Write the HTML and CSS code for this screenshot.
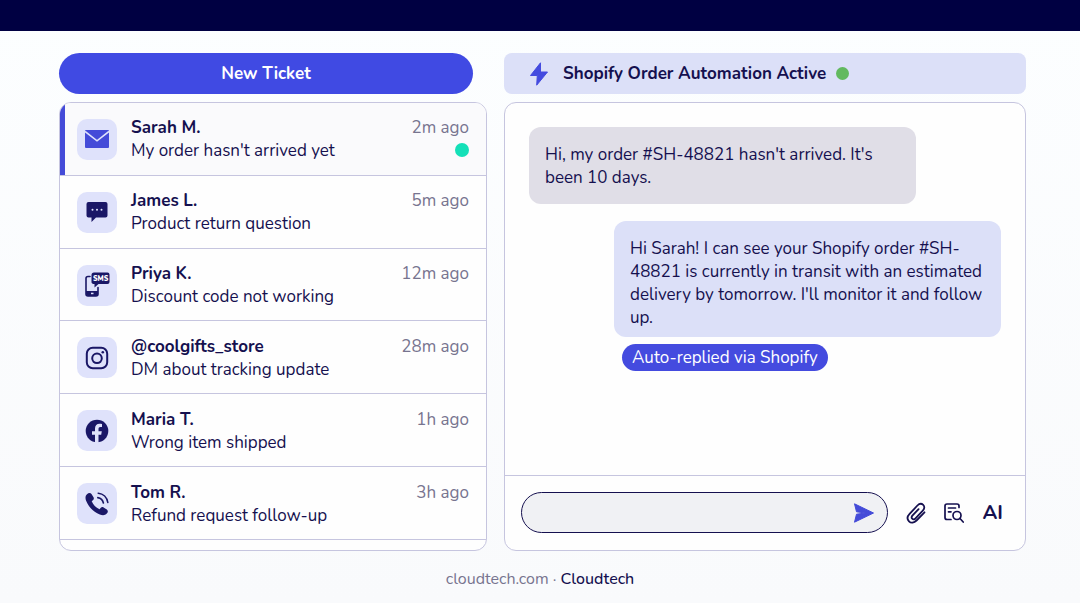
FILE: index.html
```
<!DOCTYPE html>
<html lang="en">
<head>
    <meta charset="UTF-8">
    <meta name="viewport" content="width=device-width, initial-scale=1.0">
    <title>Cloudtech Inbox</title>
    <link rel="stylesheet" href="styles.css">
</head>
<body>
    <header class="topbar"></header>

    <main class="inbox">
        <section class="tickets">
            <button class="new-ticket" type="button">New Ticket</button>
            <ul class="panel ticket-list">
                <li class="ticket active">
                    <span class="channel">
                        <svg width="24" height="18" viewBox="0 0 24 18">
                            <path fill="#444bd8" d="M1 0h22q1 0 1 1v16q0 1-1 1H1q-1 0-1-1V1q0-1 1-1z"/>
                            <path fill="none" stroke="#dfe2fb" stroke-width="1.6" d="M0 1.500l12 9.300 12-9.300"/>
                        </svg>
                    </span>
                    <div class="info">
                        <h2>Sarah M.</h2>
                        <p>My order hasn't arrived yet</p>
                    </div>
                    <div class="meta">
                        <time>2m ago</time>
                        <span class="unread"></span>
                    </div>
                </li>
                <li class="ticket">
                    <span class="channel">
                        <svg width="22" height="22" viewBox="0 0 22 22">
                            <path fill="#1a1766" d="M2.500 1h17q2 0 2 2v11.500q0 2-2 2H10L5.500 21v-4.500h-3q-2 0-2-2V3q0-2 2-2z"/>
                            <g fill="#dfe2fb"><circle cx="6.500" cy="8.800" r="1"/><circle cx="11" cy="8.800" r="1"/><circle cx="15.500" cy="8.800" r="1"/></g>
                        </svg>
                    </span>
                    <div class="info">
                        <h2>James L.</h2>
                        <p>Product return question</p>
                    </div>
                    <div class="meta"><time>5m ago</time></div>
                </li>
                <li class="ticket">
                    <span class="channel">
                        <svg width="26" height="26" viewBox="0 0 26 26">
                            <path fill="none" stroke="#1a1766" stroke-width="1.600" stroke-linecap="round" d="M6 4.500H4q-2 0-2 2v15.500q0 2 2 2h8q2 0 2-2v-6.500"/>
                            <path fill="#1a1766" d="M2 19h12v3q0 2-2 2H4q-2 0-2-2z"/>
                            <rect x="7" y="20.700" width="2.500" height="1.500" fill="#dfe2fb"/>
                            <path fill="#1a1766" d="M10 .5h13.500q2 0 2 2v7.500q0 2-2 2H14.500L10.500 15.500V12q-3 0-3-2V3q0-2.500 2.500-2.500z"/>
                            <text class="sms" x="16.600" y="8.600" text-anchor="middle">SMS</text>
                        </svg>
                    </span>
                    <div class="info">
                        <h2>Priya K.</h2>
                        <p>Discount code not working</p>
                    </div>
                    <div class="meta"><time>12m ago</time></div>
                </li>
                <li class="ticket">
                    <span class="channel">
                        <svg width="24" height="24" viewBox="0 0 24 24" fill="none" stroke="#1a1766" stroke-width="2">
                            <rect x="1.800" y="1.800" width="20.400" height="20.400" rx="6"/>
                            <circle cx="12" cy="12.300" r="4.800"/>
                            <circle cx="17.800" cy="6.300" r="1.300" fill="#1a1766" stroke="none"/>
                        </svg>
                    </span>
                    <div class="info">
                        <h2>@coolgifts_store</h2>
                        <p>DM about tracking update</p>
                    </div>
                    <div class="meta"><time>28m ago</time></div>
                </li>
                <li class="ticket">
                    <span class="channel">
                        <svg width="24" height="24" viewBox="0 0 24 24">
                            <circle cx="12" cy="12" r="11.300" fill="#1a1766"/>
                            <path fill="#dfe2fb" d="M10 24v-8.200H7V12.300h3V9.500C10 6.400 11.800 4.800 14.500 4.800c1 0 1.900.1 2.500.2v3h-1.500c-1.500 0-2 .8-2 1.900v2.400h3.300l-.6 3.500h-2.700V24z"/>
                        </svg>
                    </span>
                    <div class="info">
                        <h2>Maria T.</h2>
                        <p>Wrong item shipped</p>
                    </div>
                    <div class="meta"><time>1h ago</time></div>
                </li>
                <li class="ticket">
                    <span class="channel">
                        <svg width="24" height="24" viewBox="0 0 24 24">
                            <path fill="#1a1766" d="M2 2.200C3.500.6 5.500.5 6.500 2l2 3.300c.7 1.200.3 2.200-.6 3l-1.200 1c1.500 3.600 4.100 6.300 7.800 8l1.100-1.300c.8-1 2-1.200 3-.6l3.200 2c1.400 1 1.400 2.800 0 4.200-1.800 1.800-4 2.100-7 .9C8.500 20 3.600 15 1.100 8.800.1 6 .3 3.800 2 2.200z"/>
                            <path fill="none" stroke="#1a1766" stroke-width="1.600" stroke-linecap="round" d="M13.200 1.200c5 .5 8.800 4.200 9.600 9.300M12.800 5.600c3 .5 5 2.500 5.600 5.400"/>
                        </svg>
                    </span>
                    <div class="info">
                        <h2>Tom R.</h2>
                        <p>Refund request follow-up</p>
                    </div>
                    <div class="meta"><time>3h ago</time></div>
                </li>
            </ul>
        </section>

        <section class="conversation">
            <div class="automation">
                <svg width="20" height="24" viewBox="0 0 20 24">
                    <path fill="#444bdf" stroke="#444bdf" stroke-linejoin="round" d="M11.500.800L1.500 13.500h6.800L7.700 23.200 18.500 10h-7z"/>
                </svg>
                <h1>Shopify Order Automation Active</h1>
                <span class="status"></span>
            </div>
            <div class="panel chat">
                <div class="thread">
                    <p class="bubble">Hi, my order #SH-48821 hasn't arrived. It's been 10 days.</p>
                    <div class="reply">
                        <p class="bubble">Hi Sarah! I can see your Shopify order #SH-48821 is currently in transit with an estimated delivery by tomorrow. I'll monitor it and follow up.</p>
                        <span class="tag">Auto-replied via Shopify</span>
                    </div>
                </div>
                <form class="composer">
                    <div class="field">
                        <input type="text" aria-label="Message">
                        <button type="button" aria-label="Send">
                            <svg width="22" height="22" viewBox="0 0 22 22">
                                <path fill="#444bd8" stroke="#444bd8" stroke-linejoin="round" d="M1.500 1.800L20.500 11 1.500 20.200 3.500 12.200 12.500 11 3.500 9.800z"/>
                            </svg>
                        </button>
                    </div>
                    <button type="button" aria-label="Attach file">
                        <svg width="20" height="22" viewBox="0 0 20 22" fill="none" stroke="#15104f" stroke-width="1.800" stroke-linecap="round">
                            <path d="M18.500 10.300l-8 8.200c-2.400 2.400-5.500 2.800-7.500.8s-1.700-5 .6-7.400l7.800-8.400c1.800-1.900 4.200-2.200 5.800-.7s1.400 3.900-.4 5.800l-7.300 7.700c-1.100 1.200-2.400 1.300-3.300.4s-.7-2.100.4-3.300l6-6.300"/>
                        </svg>
                    </button>
                    <button type="button" aria-label="Search notes">
                        <svg width="20" height="20" viewBox="0 0 20 20" fill="none" stroke="#15104f" stroke-width="1.700" stroke-linecap="round">
                            <path d="M7 16.500H3q-2 0-2-2V3q0-2 2-2h10q2 0 2 2v1.500M4.500 5h7M4.500 8.800H7"/>
                            <circle cx="13" cy="12.500" r="4"/>
                            <path d="M16 15.500l3.200 3.500"/>
                        </svg>
                    </button>
                    <button class="ai" type="button">AI</button>
                </form>
            </div>
        </section>
    </main>

    <footer class="footer">
        <a href="#">cloudtech.com</a> · <strong>Cloudtech</strong>
    </footer>
</body>
</html>
```
FILE: styles.css
```
*{
    margin: 0;
    padding: 0;
    box-sizing: border-box;
}

body{
    display: flex;
    flex-direction: column;
    min-height: 100vh;
    font-family: Nunito, Lato, sans-serif;
    font-size: 17px;
    line-height: 23px;
    color: #15104f;
    background: linear-gradient(#fcfeff, #f9fafc);
}

button{
    border: none;
    background: none;
    font: inherit;
    color: inherit;
    cursor: pointer;
}

svg{
    display: block;
}

.topbar{
    height: 31px;
    background-color: #000042;
}

.inbox{
    flex: 1;
    display: grid;
    grid-template-columns: 428fr 522fr;
    gap: 17px;
    padding: 22px 54px 0 59px;
}

.tickets,
.conversation{
    display: flex;
    flex-direction: column;
    gap: 8px;
    min-width: 0;
}

.panel{
    flex: 1;
    display: flex;
    flex-direction: column;
    border: 1px solid #c6c5df;
    border-radius: 12px;
    background-color: #fefefe;
    overflow: hidden;
}

/* ticket list */
.new-ticket{
    height: 41px;
    margin-right: 14px;
    border-radius: 21px;
    background-color: #404ae3;
    color: #fff;
    font-weight: 700;
}

.ticket-list{
    list-style: none;
    padding-bottom: 10px;
}

.ticket{
    flex: 1;
    display: flex;
    align-items: center;
    gap: 14px;
    padding: 1px 17px 0;
    border-bottom: 1px solid #c6c5df;
}

.ticket.active{
    background-color: #fafafc;
    box-shadow: inset 5px 0 #444bd8;
}

.channel{
    display: flex;
    align-items: center;
    justify-content: center;
    width: 40px;
    height: 41px;
    border-radius: 10px;
    background-color: #dfe2fb;
}

.sms{
    font-size: 7px;
    font-weight: 900;
    fill: #fff;
}

.info{
    flex: 1;
}

.info h2{
    font-size: 17px;
    font-weight: 700;
}

.meta{
    display: flex;
    flex-direction: column;
    align-items: flex-end;
    height: 46px;
    color: #77748f;
}

.unread{
    width: 14px;
    height: 14px;
    margin-top: 4px;
    border-radius: 50%;
    background-color: #14e0b8;
}

/* conversation */
.automation{
    display: flex;
    align-items: center;
    gap: 14px;
    height: 41px;
    padding: 0 25px;
    border-radius: 8px;
    background-color: #dce0f8;
}

.automation h1{
    font-size: 17px;
    font-weight: 700;
}

.status{
    width: 13px;
    height: 13px;
    margin-left: -4px;
    border-radius: 50%;
    background-color: #62b95f;
}

.thread{
    flex: 1;
    display: flex;
    flex-direction: column;
    gap: 17px;
    padding: 24px;
}

.bubble{
    width: 82%;
    padding: 16px 16px 15px;
    border-radius: 12px;
    background-color: #e0dee7;
}

.reply{
    align-self: flex-end;
    display: flex;
    flex-direction: column;
    align-items: flex-start;
    gap: 7px;
    width: 82%;
}

.reply .bubble{
    width: 100%;
    padding-bottom: 8px;
    background-color: #dce0f8;
}

.tag{
    margin-left: 8px;
    padding: 2px 10px;
    border-radius: 14px;
    background-color: #444bdf;
    color: #fff;
}

.composer{
    display: flex;
    align-items: center;
    gap: 18px;
    padding: 16px 22px 17px 16px;
    border-top: 1px solid #c6c5df;
}

.field{
    flex: 1;
    display: flex;
    align-items: center;
    height: 41px;
    padding: 0 12px 0 18px;
    border: 1px solid #15104f;
    border-radius: 21px;
    background-color: #f0f1f4;
}

.field input{
    flex: 1;
    min-width: 0;
    border: none;
    outline: none;
    background: none;
    font: inherit;
    color: inherit;
}

.ai{
    font-size: 20px;
    font-weight: 700;
}

.footer{
    padding: 17px 0 12px;
    font-size: 16px;
    text-align: center;
    color: #77748f;
}

.footer a{
    color: inherit;
    text-decoration: none;
}

.footer strong{
    font-weight: 500;
    color: #15104f;
}
```
